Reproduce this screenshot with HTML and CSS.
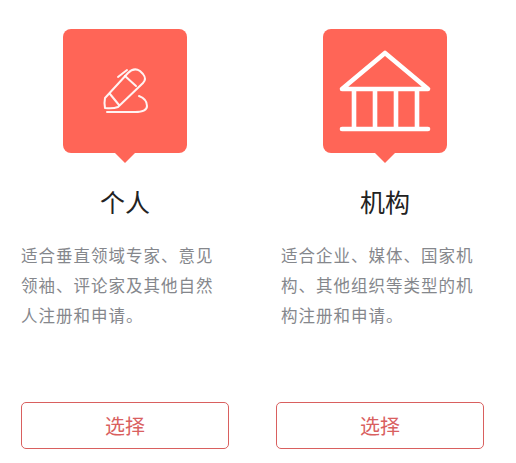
FILE: index.html
```html
<!DOCTYPE html>
<html lang="zh-CN">
<head>
<meta charset="utf-8">
<title>选择类型</title>
<link rel="stylesheet" href="styles.css">
</head>
<body>
<main class="cards">
  <section class="card">
    <div class="badge">
      <svg class="icon" viewBox="0 0 124 124" fill="none" stroke="#fff" stroke-width="2" stroke-linecap="round" stroke-linejoin="round" stroke-opacity="0.92">
        <path d="M42 69 L65 44 Q71 38 77 42 L80 45 Q84 50 80 54 L55 78 Q50 80 42 79 Q41 74 42 69 Z"/>
        <path d="M47 65 L56 76"/>
        <path d="M62 47 L73 57"/>
        <path d="M55 48 L64 41"/>
        <path d="M44 83 H72 Q84 83 84 77 Q84 70 76 67"/>
      </svg>
    </div>
    <h2 class="title">个人</h2>
    <p class="desc">适合垂直领域专家、意见领袖、评论家及其他自然人注册和申请。</p>
    <button class="choose">选择</button>
  </section>
  <section class="card card-right">
    <div class="badge">
      <svg class="icon" viewBox="0 0 124 124" fill="none" stroke="#fff" stroke-width="4.6" stroke-linecap="round" stroke-linejoin="round">
        <path d="M19 60 L62 24 L105 60 Z"/>
        <path d="M31 60 V99 M52 60 V99 M73 60 V99 M94 60 V99" stroke-linecap="butt"/>
        <path d="M19 100 H105"/>
      </svg>
    </div>
    <h2 class="title">机构</h2>
    <p class="desc">适合企业、媒体、国家机构、其他组织等类型的机构注册和申请。</p>
    <button class="choose">选择</button>
  </section>
</main>
</body>
</html>
```
FILE: styles.css
```css
* { box-sizing: border-box; }
html, body { margin: 0; padding: 0; background: #fff; }
body {
  width: 516px;
  height: 463px;
  overflow: hidden;
  font-family: "Noto Sans CJK SC", "Liberation Sans", sans-serif;
}
.cards {
  display: flex;
  gap: 52px;
  padding: 29px 0 0 21px;
}
.card {
  width: 208px;
  display: flex;
  flex-direction: column;
  align-items: center;
}
.badge {
  position: relative;
  width: 124px;
  height: 124px;
  background: #ff6557;
  border-radius: 8px;
}
.badge::after {
  content: "";
  position: absolute;
  left: 52px;
  bottom: -10px;
  border-left: 10px solid transparent;
  border-right: 10px solid transparent;
  border-top: 10px solid #ff6557;
}
.icon {
  display: block;
  width: 124px;
  height: 124px;
}
.title {
  margin: 30px 0 0;
  font-size: 25px;
  line-height: 36px;
  font-weight: 400;
  color: #222;
}
.desc {
  align-self: stretch;
  margin: 21px 0 0;
  height: 141px;
  font-size: 16.5px;
  line-height: 30px;
  letter-spacing: 1px;
  color: #85878c;
}
.choose {
  align-self: stretch;
  height: 47px;
  margin-top: 21px;
  padding: 0;
  background: #fff;
  border: 1px solid #d9605f;
  border-radius: 5px;
  color: #d9605f;
  font-family: inherit;
  font-size: 20px;
}
.card-right .choose {
  margin-left: -5px;
  margin-right: 5px;
}
```
